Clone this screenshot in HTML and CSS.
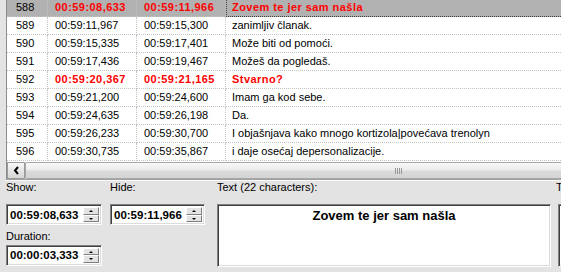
FILE: index.html
```html
<!DOCTYPE html>
<html lang="sr">
<head>
    <meta charset="UTF-8">
    <title>Subtitle Edit</title>
    <link rel="stylesheet" href="styles.css">
</head>
<body>
    <div class="list">
        <div class="viewport">
            <table class="grid">
                <colgroup>
                    <col class="c-num"><col class="c-time"><col class="c-time"><col class="c-text">
                </colgroup>
                <tr class="sel red"><td class="num">588</td><td>00:59:08,633</td><td>00:59:11,966</td><td class="txt">Zovem te jer sam našla</td></tr>
                <tr><td class="num">589</td><td>00:59:11,967</td><td>00:59:15,300</td><td class="txt">zanimljiv članak.</td></tr>
                <tr><td class="num">590</td><td>00:59:15,335</td><td>00:59:17,401</td><td class="txt">Može biti od pomoći.</td></tr>
                <tr><td class="num">591</td><td>00:59:17,436</td><td>00:59:19,467</td><td class="txt">Možeš da pogledaš.</td></tr>
                <tr class="red"><td class="num">592</td><td>00:59:20,367</td><td>00:59:21,165</td><td class="txt">Stvarno?</td></tr>
                <tr><td class="num">593</td><td>00:59:21,200</td><td>00:59:24,600</td><td class="txt">Imam ga kod sebe.</td></tr>
                <tr><td class="num">594</td><td>00:59:24,635</td><td>00:59:26,198</td><td class="txt">Da.</td></tr>
                <tr><td class="num">595</td><td>00:59:26,233</td><td>00:59:30,700</td><td class="txt">I objašnjava kako mnogo kortizola|povećava trenolyn</td></tr>
                <tr><td class="num">596</td><td>00:59:30,735</td><td>00:59:35,867</td><td class="txt">i daje osećaj depersonalizacije.</td></tr>
            </table>
        </div>
        <div class="hscroll">
            <div class="arrow">
                <svg width="7" height="9" viewBox="0 0 7 9"><path d="M5 1 L2 4.5 L5 8" fill="none" stroke="#000" stroke-width="2"/></svg>
            </div>
            <div class="thumb"><span class="grip"></span></div>
        </div>
    </div>

    <div class="editor">
        <div class="times">
            <div class="field">
                <div class="label">Show:</div>
                <div class="spin"><span class="value">00:59:08,633</span><span class="arrows"><span class="btn up"></span><span class="btn down"></span></span></div>
            </div>
            <div class="field">
                <div class="label">Hide:</div>
                <div class="spin"><span class="value">00:59:11,966</span><span class="arrows"><span class="btn up"></span><span class="btn down"></span></span></div>
            </div>
            <div class="field">
                <div class="label second">Duration:</div>
                <div class="spin"><span class="value">00:00:03,333</span><span class="arrows"><span class="btn up"></span><span class="btn down"></span></span></div>
            </div>
        </div>
        <div class="textfield">
            <div class="label">Text (22 characters):</div>
            <div class="textbox">Zovem te jer sam našla</div>
        </div>
        <div class="textfield cut">
            <div class="label">T</div>
            <div class="textbox"></div>
        </div>
    </div>
</body>
</html>
```

FILE: styles.css
```css
* {
    margin: 0;
    padding: 0;
    box-sizing: border-box;
}
body {
    width: 561px;
    height: 272px;
    overflow: hidden;
    background: #e3e3e3;
    font: 11px "Liberation Sans", Arial, sans-serif;
    color: #000;
}

/* subtitle list */
.list {
    margin-left: 6px;
    height: 180px;
    border-left: 1px solid #8c8c8c;
    border-bottom: 1px solid #a0a0a0;
    background: #fff;
    box-shadow: 0 1px 0 #fafafa;
}
.viewport {
    height: 162px;
    overflow: hidden;
}
.grid {
    margin-top: -1px;
    width: 720px;
    table-layout: fixed;
    border-collapse: separate;
    border-spacing: 0;
}
.c-num { width: 41px; }
.c-time { width: 89px; }
.grid td {
    height: 18px;
    line-height: 17px;
    padding: 0 0 0 7px;
    border-right: 1px dotted #c4c4c4;
    border-bottom: 1px dotted #c4c4c4;
    white-space: nowrap;
    overflow: hidden;
}
.grid td.num { padding-left: 9px; }
.grid td.txt {
    padding-left: 6px;
    border-right: 0;
}
.grid .red td {
    color: #f00;
    font-weight: bold;
    letter-spacing: 0.45px;
}
.grid .red td.num {
    color: #000;
    font-weight: normal;
    letter-spacing: 0;
}
.grid .sel td { background: #b1b1b1; }
.grid .sel td.txt {
    outline: 1px dotted #3c3c3c;
    outline-offset: -1px;
}

/* horizontal scrollbar */
.hscroll {
    display: flex;
    height: 17px;
    background: #ededed;
}
.arrow {
    flex: none;
    width: 18px;
    display: flex;
    align-items: center;
    justify-content: center;
    border: 1px solid #9a9a9a;
    background: linear-gradient(#f7f7f7, #e6e6e6 50%, #d6d6d6);
}
.thumb {
    flex: none;
    width: 748px;
    display: flex;
    align-items: center;
    justify-content: center;
    border: 1px solid #a8a8a8;
    border-radius: 2px;
    background: linear-gradient(#f8f8f8, #ececec 45%, #dadada 55%, #d4d4d4);
}
.grip {
    width: 8px;
    height: 6px;
    background: repeating-linear-gradient(90deg, #9a9a9a 0 1px, transparent 1px 2px);
}

/* editor panel */
.editor {
    display: flex;
    padding: 1px 0 0 6px;
}
.label {
    height: 13px;
    line-height: 13px;
}
.times {
    display: grid;
    grid-template-columns: 96px 95px;
    column-gap: 8px;
}
.field .label { margin-bottom: 10px; }
.field .label.second {
    margin-top: 3px;
    margin-bottom: 2px;
}
.spin {
    display: flex;
    align-items: center;
    height: 21px;
    border: 1px solid;
    border-color: #808080 #fff #fff #808080;
    box-shadow: inset 1px 1px 0 #404040, inset -1px -1px 0 #dcdcdc;
    background: #fff;
    padding: 2px;
}
.value {
    flex: 1;
    font-weight: bold;
    font-size: 11.5px;
    padding-left: 1px;
}
.arrows {
    display: flex;
    flex-direction: column;
    width: 16px;
    height: 15px;
}
.btn {
    flex: 1;
    position: relative;
    background: #e3e3e3;
    border: 1px solid;
    border-color: #fff #808080 #808080 #fff;
}
.btn::after {
    content: "";
    position: absolute;
    left: 5px;
    border-left: 2px solid transparent;
    border-right: 2px solid transparent;
}
.up::after {
    top: 2px;
    border-bottom: 2px solid #000;
}
.down::after {
    top: 2px;
    border-top: 2px solid #000;
}
.textfield {
    margin-left: 12px;
}
.textbox {
    width: 334px;
    height: 63px;
    margin-top: 10px;
    border: 1px solid;
    border-color: #808080 #fff #fff #808080;
    box-shadow: inset 1px 1px 0 #404040, inset -1px -1px 0 #dcdcdc;
    background: #fff;
    text-align: center;
    font-weight: bold;
    font-size: 13px;
    padding-top: 3px;
}
.cut {
    margin-left: 5px;
}
.cut .textbox {
    width: 40px;
    margin-left: 2px;
}
```
